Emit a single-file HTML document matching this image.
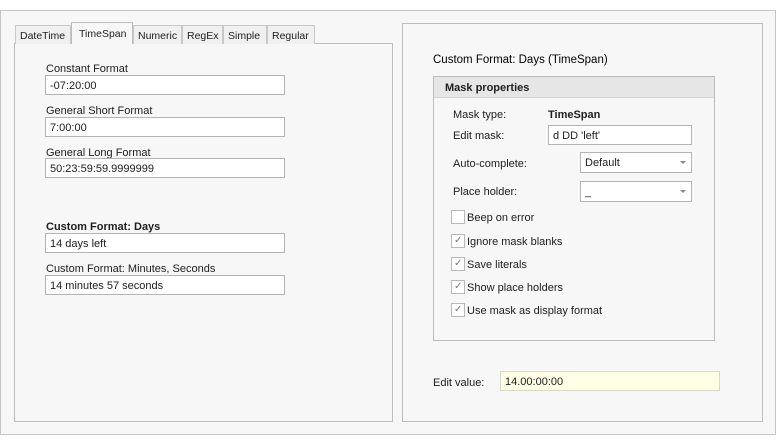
<!DOCTYPE html>
<html><head><style>
*{box-sizing:border-box;margin:0;padding:0}
body{width:776px;height:445px;background:#fff;font-family:"Liberation Sans",sans-serif;font-size:11px;color:#202020;position:relative;overflow:hidden}
.a{position:absolute}
.outer{left:0;top:10px;width:776px;height:425px;background:#f7f7f7;border:1px solid #c6c6c6}
.box{position:absolute;border:1px solid #bcbcbc;background:#f7f7f7}
.in{position:absolute;background:#fff;border:1px solid #b4b4b4;height:20px;padding:4px 0 0 4px;white-space:nowrap}
.tab{position:absolute;top:25px;height:19px;border:1px solid #c8c8c8;border-bottom:none;background:#f0f0f0;padding:4px 0 0 4px;font-size:10.5px;white-space:nowrap}
.tab.sel{top:22px;height:22px;background:#f7f7f7;border-color:#bcbcbc;padding-top:5px}
.cb{position:absolute;left:451px;width:14px;height:14px;border:1px solid #b8b8b8;background:#fff}
.cl{position:absolute;left:467px}
.dd{position:absolute;right:5px;top:8px;width:0;height:0;border-left:3px solid transparent;border-right:3px solid transparent;border-top:3px solid #888}
</style></head><body>
<div class="a outer"></div>
<div class="box" style="left:14px;top:43px;width:379px;height:379px"></div>
<div class="tab" style="left:15px;width:56px">DateTime</div>
<div class="tab" style="left:133px;width:49px">Numeric</div>
<div class="tab" style="left:182px;width:41px">RegEx</div>
<div class="tab" style="left:223px;width:44px">Simple</div>
<div class="tab" style="left:267px;width:48px">Regular</div>
<div class="tab sel" style="left:71px;width:62px;padding-left:7px">TimeSpan</div>

<div class="a" style="left:46px;top:63px">Constant Format</div>
<div class="in" style="left:45px;top:75px;width:240px">-07:20:00</div>
<div class="a" style="left:46px;top:105px">General Short Format</div>
<div class="in" style="left:45px;top:117px;width:240px">7:00:00</div>
<div class="a" style="left:46px;top:147px">General Long Format</div>
<div class="in" style="left:45px;top:158px;width:240px">50:23:59:59.9999999</div>
<div class="a" style="left:46px;top:221px;font-weight:bold">Custom Format: Days</div>
<div class="in" style="left:45px;top:233px;width:240px">14 days left</div>
<div class="a" style="left:46px;top:263px">Custom Format: Minutes, Seconds</div>
<div class="in" style="left:45px;top:275px;width:240px">14 minutes 57 seconds</div>

<div class="box" style="left:402px;top:23px;width:361px;height:399px"></div>
<div class="a" style="left:433px;top:54px;font-size:11.5px;color:#000">Custom Format: Days (TimeSpan)</div>
<div class="box" style="left:433px;top:76px;width:282px;height:265px"></div>
<div class="a" style="left:434px;top:77px;width:280px;height:21px;background:#e6e6e6;border-bottom:1px solid #d4d4d4;font-weight:bold;padding:5px 0 0 11px">Mask properties</div>
<div class="a" style="left:453px;top:109px">Mask type:</div>
<div class="a" style="left:548px;top:109px;font-weight:bold">TimeSpan</div>
<div class="a" style="left:453px;top:130px">Edit mask:</div>
<div class="in" style="left:548px;top:125px;width:144px">d DD 'left'</div>
<div class="a" style="left:453px;top:158px">Auto-complete:</div>
<div class="in" style="left:580px;top:152px;width:112px;height:21px">Default<div class="dd"></div></div>
<div class="a" style="left:453px;top:186px">Place holder:</div>
<div class="in" style="left:580px;top:181px;width:112px;height:21px">_<div class="dd"></div></div>
<div class="cb" style="top:210px"></div><div class="cl" style="top:212px">Beep on error</div>
<div class="cb" style="top:234px;color:#777;font-size:10px;padding-left:2px">✓</div><div class="cl" style="top:236px">Ignore mask blanks</div>
<div class="cb" style="top:257px;color:#777;font-size:10px;padding-left:2px">✓</div><div class="cl" style="top:259px">Save literals</div>
<div class="cb" style="top:280px;color:#777;font-size:10px;padding-left:2px">✓</div><div class="cl" style="top:282px">Show place holders</div>
<div class="cb" style="top:303px;color:#777;font-size:10px;padding-left:2px">✓</div><div class="cl" style="top:305px">Use mask as display format</div>
<div class="a" style="left:433px;top:377px">Edit value:</div>
<div class="in" style="left:500px;top:371px;width:220px;background:#ffffe6;border-color:#d8d8c8">14.00:00:00</div>
</body></html>
